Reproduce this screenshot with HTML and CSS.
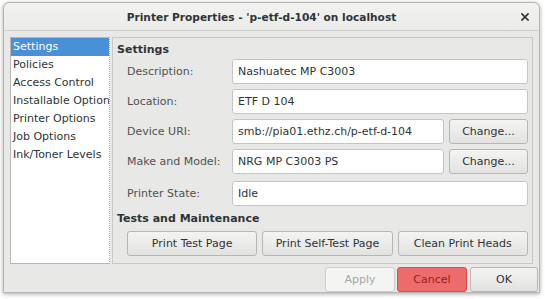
FILE: index.html
```html
<!DOCTYPE html>
<html>
<head>
<meta charset="utf-8">
<link rel="stylesheet" href="styles.css">
</head>
<body>
<div class="window">
  <div class="titlebar">
    <span class="title">Printer Properties - 'p-etf-d-104' on localhost</span>
    <span class="close">
      <svg width="8" height="8" viewBox="0 0 8 8"><path d="M1 1L7 7M7 1L1 7" stroke="#2e3436" stroke-width="1.7" stroke-linecap="square"/></svg>
    </span>
  </div>
  <div class="content">
    <ul class="sidebar">
      <li class="selected">Settings</li>
      <li>Policies</li>
      <li>Access Control</li>
      <li>Installable Options</li>
      <li>Printer Options</li>
      <li>Job Options</li>
      <li>Ink/Toner Levels</li>
    </ul>
    <div class="panel">
      <div class="heading">Settings</div>
      <div class="form">
        <label class="lbl">Description:</label>
        <div class="entry span2">Nashuatec MP C3003</div>
        <label class="lbl">Location:</label>
        <div class="entry span2">ETF D 104</div>
        <label class="lbl">Device URI:</label>
        <div class="entry">smb://pia01.ethz.ch/p-etf-d-104</div>
        <div class="btn">Change...</div>
        <label class="lbl">Make and Model:</label>
        <div class="entry">NRG MP C3003 PS</div>
        <div class="btn">Change...</div>
        <label class="lbl state">Printer State:</label>
        <div class="entry span2 state">Idle</div>
      </div>
      <div class="heading tests">Tests and Maintenance</div>
      <div class="testrow">
        <div class="btn">Print Test Page</div>
        <div class="btn">Print Self-Test Page</div>
        <div class="btn">Clean Print Heads</div>
      </div>
    </div>
  </div>
  <div class="actions">
    <div class="btn act disabled">Apply</div>
    <div class="btn act cancel">Cancel</div>
    <div class="btn act ok">OK</div>
  </div>
</div>
</body>
</html>
```

FILE: styles.css
```css
* { box-sizing: border-box; }
html, body { margin: 0; padding: 0; }
body {
  background: #ffffff;
  font-family: "DejaVu Sans", sans-serif;
  font-size: 11px;
  color: #2e3436;
  width: 545px;
  height: 299px;
  overflow: hidden;
}
.window {
  margin: 2px 0 0 3px;
  width: 537px;
  height: 291px;
  background: #e8e8e7;
  border: 1px solid #b6b6b3;
  border-radius: 6px 6px 0 0;
  box-shadow: 0 1px 4px rgba(0,0,0,0.35);
  display: flex;
  flex-direction: column;
}
.titlebar {
  height: 28px;
  flex: none;
  background: linear-gradient(#f2f2f1, #ebebea);
  border-bottom: 1px solid #d0d0ce;
  border-radius: 6px 6px 0 0;
  display: flex;
  align-items: center;
  justify-content: center;
  padding-right: 20px;
  position: relative;
}
.title {
  font-weight: bold;
  font-size: 10.6px;
  color: #2e3436;
}
.close {
  position: absolute;
  right: 10px;
  top: 10px;
  width: 8px;
  height: 8px;
  display: flex;
}
.content {
  flex: none;
  display: flex;
  gap: 2px;
  padding: 6px 6px 0 6px;
  height: 233px;
}
.sidebar {
  list-style: none;
  margin: 0;
  padding: 0;
  width: 100px;
  flex: none;
  background: #fff;
  border: 1px solid #b6b6b3;
  border-right: 1px dotted #a8a8a6;
  overflow: hidden;
  white-space: nowrap;
}
.sidebar li {
  height: 18px;
  line-height: 18px;
  padding-left: 2px;
  color: #2e3436;
}
.sidebar li.selected {
  background: #4a90d9;
  color: #fff;
}
.panel {
  flex: 1;
  border: 1px solid #c8c8c6;
  padding: 3px 4px 0 4px;
}
.heading {
  font-weight: bold;
  height: 18px;
  line-height: 18px;
}
.form {
  display: grid;
  grid-template-columns: 100px 1fr 79px;
  column-gap: 5px;
  row-gap: 5px;
  padding-left: 10px;
}
.lbl {
  color: #4f5250;
  display: flex;
  align-items: center;
  height: 25px;
}
.entry {
  height: 25px;
  background: #fff;
  border: 1px solid #c5c5c2;
  border-radius: 3px;
  padding: 0 5px;
  display: flex;
  align-items: center;
  color: #2e3436;
  white-space: nowrap;
  overflow: hidden;
}
.span2 { grid-column: span 2; }
.state { margin-top: 2px; }
.btn {
  height: 25px;
  border: 1px solid #b6b6b3;
  border-radius: 3px;
  background: linear-gradient(#f4f4f3, #e2e2e0);
  display: flex;
  align-items: center;
  justify-content: center;
  color: #2e3436;
  white-space: nowrap;
}
.tests { margin-top: 4px; }
.testrow {
  display: grid;
  grid-template-columns: 1fr 1fr 1fr;
  column-gap: 5px;
  padding-left: 10px;
  margin-top: 3px;
}
.actions {
  flex: 1;
  display: flex;
  justify-content: flex-end;
  align-items: flex-start;
  gap: 2px;
  padding: 3px 1px 0 0;
}
.act { width: 70px; height: 25px; }
.ok { width: 68px; margin-left: 1px; }
.disabled {
  background: #f4f4f3;
  color: #a6a6a4;
  border-color: #cdcdcb;
}
.cancel {
  background: #ed6b6b;
  border-color: #d74e4e;
  color: #9b1e1e;
}
```
